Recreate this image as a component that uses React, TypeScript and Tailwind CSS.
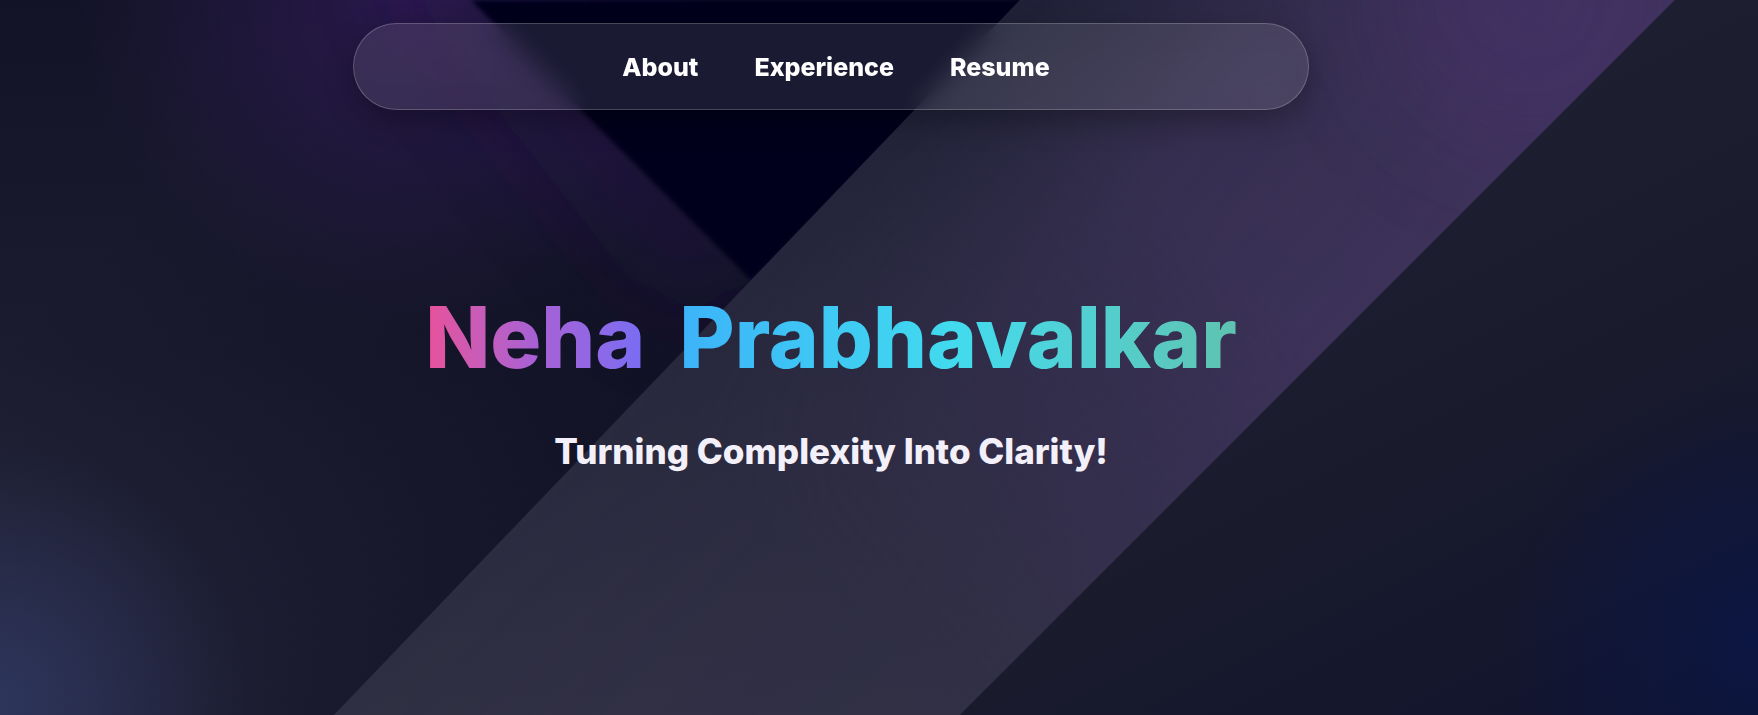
import React from "react";

const Backdrop = () => {
  return (
    <svg
      className="absolute inset-0 h-full w-full"
      viewBox="0 0 1758 715"
      preserveAspectRatio="none"
      aria-hidden="true"
    >
      <defs>
        <clipPath id="clipLeft">
          <polygon points="0,0 1020,0 334,715 0,715" />
        </clipPath>
        <clipPath id="clipMid">
          <polygon points="1020,0 1675,0 960,715 334,715" />
        </clipPath>
        <clipPath id="clipRight">
          <polygon points="1675,0 1758,0 1758,715 960,715" />
        </clipPath>
        <filter id="blurBig" x="-150%" y="-150%" width="400%" height="400%">
          <feGaussianBlur stdDeviation="55" />
        </filter>
        <filter id="blurSmall" x="-10%" y="-10%" width="120%" height="120%">
          <feGaussianBlur stdDeviation="2" />
        </filter>
        <linearGradient id="leftFill" x1="0" y1="0" x2="0" y2="715" gradientUnits="userSpaceOnUse">
          <stop offset="0" stopColor="#131327" />
          <stop offset="0.5" stopColor="#1b1c2f" />
          <stop offset="1" stopColor="#2f3045" />
        </linearGradient>
        <linearGradient id="leftShade" x1="677" y1="357" x2="316" y2="11" gradientUnits="userSpaceOnUse">
          <stop offset="0" stopColor="#0b0b1f" stopOpacity="0.6" />
          <stop offset="1" stopColor="#0b0b1f" stopOpacity="0" />
        </linearGradient>
        <radialGradient id="purpleGlow" cx="410" cy="0" r="330" gradientUnits="userSpaceOnUse">
          <stop offset="0" stopColor="#2d1a52" stopOpacity="0.9" />
          <stop offset="0.5" stopColor="#2a1a4c" stopOpacity="0.5" />
          <stop offset="1" stopColor="#2a1a4c" stopOpacity="0" />
        </radialGradient>
        <radialGradient id="blueGlow" cx="0" cy="700" r="250" gradientUnits="userSpaceOnUse">
          <stop offset="0" stopColor="#2f3862" stopOpacity="0.85" />
          <stop offset="1" stopColor="#2f3862" stopOpacity="0" />
        </radialGradient>
        <linearGradient id="midFill" x1="0" y1="0" x2="0" y2="715" gradientUnits="userSpaceOnUse">
          <stop offset="0" stopColor="#202138" />
          <stop offset="1" stopColor="#303043" />
        </linearGradient>
        <linearGradient id="band" x1="1317" y1="358" x2="1000" y2="41" gradientUnits="userSpaceOnUse">
          <stop offset="0" stopColor="#3e335b" stopOpacity="1" />
          <stop offset="0.55" stopColor="#3b3256" stopOpacity="0.8" />
          <stop offset="1" stopColor="#3b3256" stopOpacity="0" />
        </linearGradient>
        <linearGradient id="bandFade" x1="1675" y1="0" x2="960" y2="715" gradientUnits="userSpaceOnUse">
          <stop offset="0" stopColor="#fff" stopOpacity="1" />
          <stop offset="0.5" stopColor="#fff" stopOpacity="0.95" />
          <stop offset="1" stopColor="#fff" stopOpacity="0.1" />
        </linearGradient>
        <mask id="bandMask">
          <rect width="1758" height="715" fill="url(#bandFade)" />
        </mask>
        <linearGradient id="rightFill" x1="1400" y1="0" x2="1758" y2="715" gradientUnits="userSpaceOnUse">
          <stop offset="0" stopColor="#1f2031" />
          <stop offset="0.55" stopColor="#191a2c" />
          <stop offset="1" stopColor="#10132e" />
        </linearGradient>
        <radialGradient id="navyGlow" cx="1758" cy="640" r="260" gradientUnits="userSpaceOnUse">
          <stop offset="0" stopColor="#0b1644" stopOpacity="0.9" />
          <stop offset="1" stopColor="#0b1644" stopOpacity="0" />
        </radialGradient>
      </defs>

      <rect width="1758" height="715" fill="#1c1d2f" />

      <g clipPath="url(#clipLeft)">
        <rect width="1758" height="715" fill="url(#leftFill)" />
        <rect width="1758" height="715" fill="url(#leftShade)" />
        <rect width="1758" height="715" fill="url(#purpleGlow)" />
        <polygon
          points="400,-60 500,-60 770,250 690,310"
          fill="#26174c"
          opacity="0.6"
          filter="url(#blurBig)"
        />
        <rect width="1758" height="715" fill="url(#blueGlow)" />
        <polygon points="471,0 1030,0 751,280" fill="#03041a" filter="url(#blurSmall)" />
      </g>

      <g clipPath="url(#clipMid)">
        <rect width="1758" height="715" fill="url(#midFill)" />
        <g mask="url(#bandMask)">
          <rect width="1758" height="715" fill="url(#band)" />
        </g>
        <circle cx="1530" cy="0" r="150" fill="#4a3270" opacity="0.45" filter="url(#blurBig)" />
      </g>

      <g clipPath="url(#clipRight)">
        <rect width="1758" height="715" fill="url(#rightFill)" />
        <rect width="1758" height="715" fill="url(#navyGlow)" />
      </g>
    </svg>
  );
};

const links = ["About", "Experience", "Resume"];

const App = () => {
  return (
    <div className="relative h-[715px] w-full overflow-hidden bg-[#1c1d2f] font-['Inter',sans-serif]">
      <Backdrop />
      <div className="relative flex w-[1662px] flex-col items-center">
        <nav className="mt-[23px] flex h-[87px] w-[956px] items-center justify-center gap-[56px] rounded-full border border-white/20 bg-white/10 pl-[10px] pt-[2px] shadow-[0_10px_30px_rgba(0,0,0,0.3)] backdrop-blur-md">
          {links.map((l) => (
            <a key={l} href="#" className="text-[25px] font-extrabold leading-none text-white">
              {l}
            </a>
          ))}
        </nav>

        <h1 className="mt-[185px] flex gap-[34px] text-[85px] font-extrabold leading-none">
          <span className="bg-linear-to-r from-[#e8509a] via-[#a860d4] to-[#786df4] bg-clip-text text-transparent">
            Neha
          </span>
          <span className="bg-linear-to-r from-[#3db3f9] via-[#42dbee] to-[#5fc3b0] bg-clip-text text-transparent">
            Prabhavalkar
          </span>
        </h1>

        <p className="mt-[54px] text-[35px] font-extrabold leading-none text-[#f3f0fa]">
          Turning Complexity Into Clarity!
        </p>
      </div>
    </div>
  );
};

export default App;
